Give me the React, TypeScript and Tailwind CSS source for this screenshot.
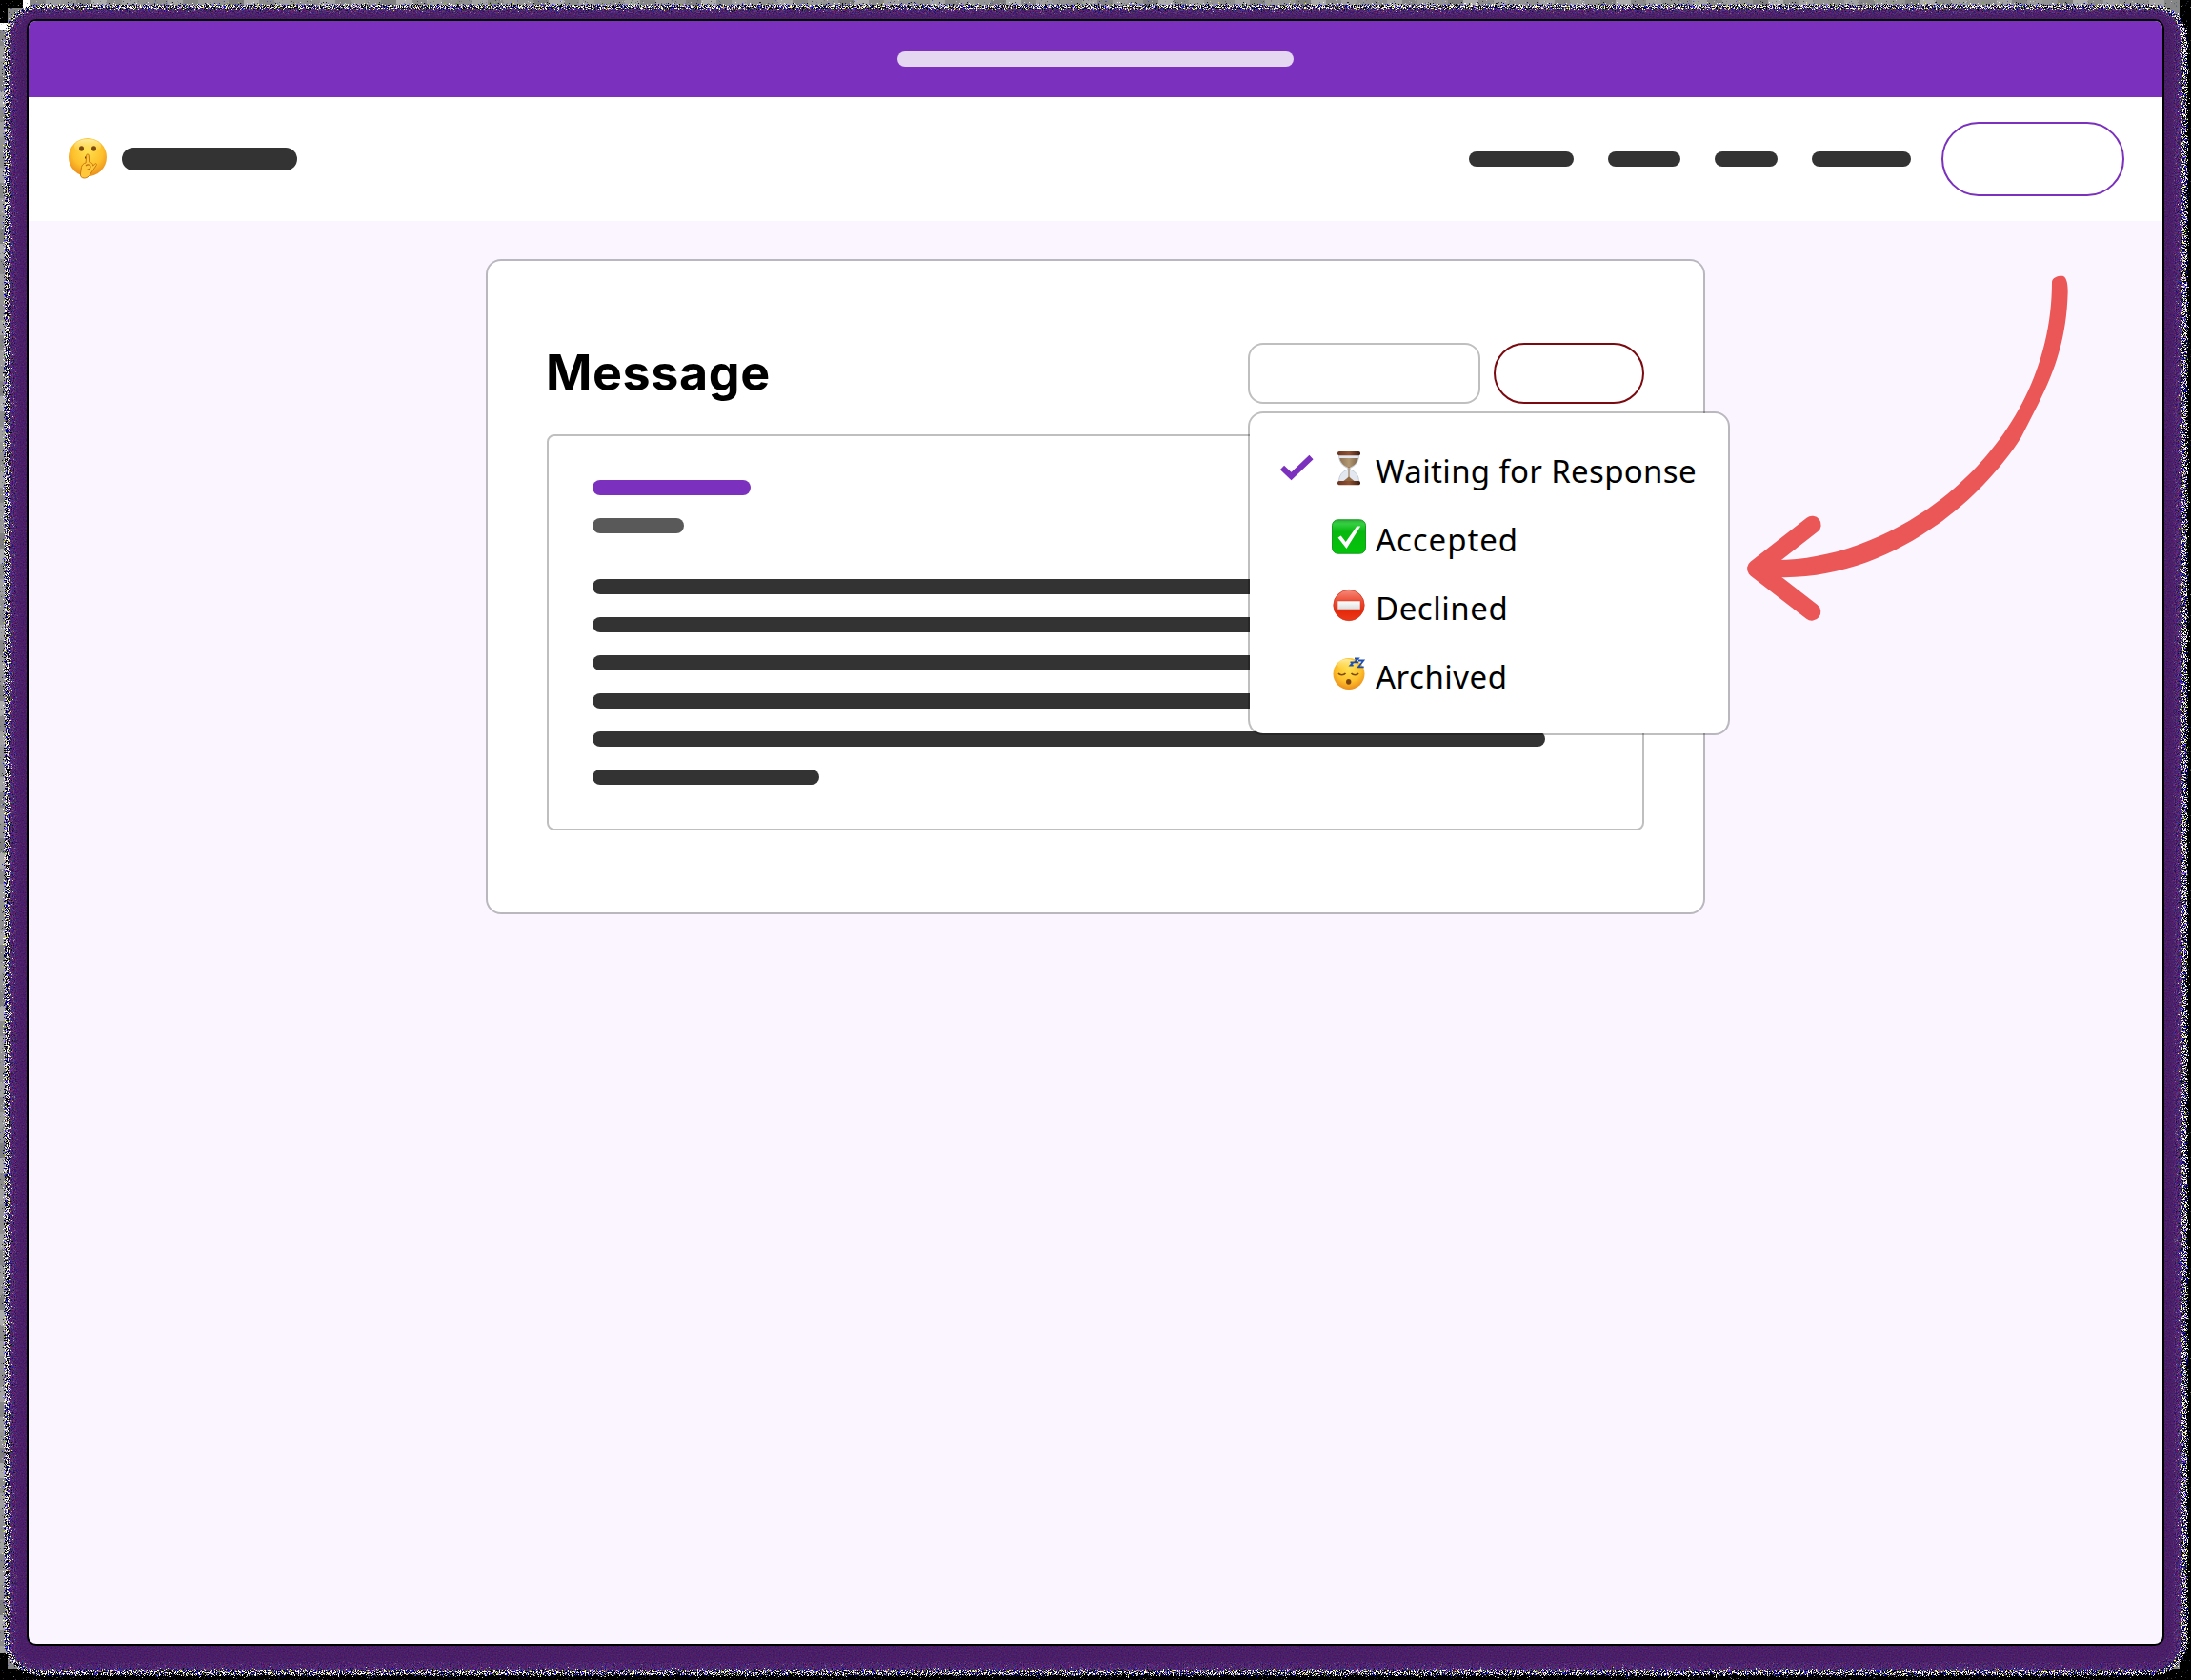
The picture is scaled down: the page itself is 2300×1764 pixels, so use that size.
import React from 'react';

function Bar({ className }: { className: string }) {
  return <div className={`rounded-full ${className}`} />;
}

function FrameTexture() {
  const greys = ['#8f8f8f', '#a4a4a4', '#868686', '#9c9c9c', '#949494', '#7f7f7f', '#adadad', '#8b8b8b', '#a0a0a0', '#939393'];
  return (
    <svg aria-hidden="true" className="absolute inset-0 h-full w-full" viewBox="0 0 2300 1764">
      <defs>
        <pattern id="greyTop" width="160" height="8" patternUnits="userSpaceOnUse">
          {greys.map((g, i) => (
            <rect key={i} x={i * 16} width="16" height="8" fill={g} />
          ))}
        </pattern>
        <pattern id="greySide" width="8" height="160" patternUnits="userSpaceOnUse">
          {greys.map((g, i) => (
            <rect key={i} y={i * 16} width="8" height="16" fill={g} />
          ))}
        </pattern>
        <filter id="speckle" x="0" y="0" width="2300" height="1764" filterUnits="userSpaceOnUse" colorInterpolationFilters="sRGB">
          <feTurbulence type="fractalNoise" baseFrequency="0.83" numOctaves="2" seed="4" result="n" />
          <feColorMatrix in="n" type="matrix" values="12 1 2 0 -7.2  12 2 1 0 -7.3  9 1 8 0 -8.4  0 0 0 0 1" result="c" />
          <feGaussianBlur in="SourceGraphic" stdDeviation="1.6" result="b" />
          <feColorMatrix in="n" type="matrix" values="0 0 0 0 0  0 0 0 0 0  0 0 0 0 0  0 2 0 0 -0.5" result="na" />
          <feComposite in="b" in2="na" operator="arithmetic" k2="10" k3="10" k4="-9.5" result="m" />
          <feComposite in="c" in2="m" operator="in" />
        </filter>
        <filter id="dissolve" x="0" y="0" width="2300" height="1764" filterUnits="userSpaceOnUse" colorInterpolationFilters="sRGB">
          <feTurbulence type="fractalNoise" baseFrequency="0.9" numOctaves="2" seed="11" result="n" />
          <feColorMatrix in="n" type="matrix" values="0 0 0 0 0  0 0 0 0 0  0 0 0 0 0  0 2 0 0 -0.5" result="na" />
          <feGaussianBlur in="SourceGraphic" stdDeviation="2.2" result="b" />
          <feComposite in="b" in2="na" operator="arithmetic" k2="8" k3="8" k4="-7.5" result="m" />
          <feColorMatrix in="n" type="matrix" values="0.9 0 0 0 -0.14  0 0.7 0 0 -0.2  0 0 0.9 0 -0.01  0 0 0 0 1" result="p" />
          <feComposite in="p" in2="m" operator="in" />
        </filter>
        <filter id="grain" x="0" y="0" width="2300" height="1764" filterUnits="userSpaceOnUse" colorInterpolationFilters="sRGB">
          <feTurbulence type="fractalNoise" baseFrequency="0.7" numOctaves="1" seed="2" result="n" />
          <feColorMatrix in="n" type="matrix" values="0.25 0 0 0 0.165  0 0.2 0 0 0.02  0 0 0.25 0 0.28  0 0 0 0 1" result="p" />
          <feGaussianBlur in="SourceGraphic" stdDeviation="2.5" result="b" />
          <feComposite in="p" in2="b" operator="in" />
        </filter>
      </defs>
      <rect width="2300" height="1764" fill="#000" />
      <rect x="32" width="2256" height="8" fill="url(#greyTop)" />
      <rect y="32" width="8" height="1704" fill="url(#greySide)" />
      <path d="M24 0h8v8h-8z M0 24h8v8H0z" fill="#fff" />
      <path d="M8 8h24v24H8z M2272 8h16v16h-16z M8 1728h16v24H8z M2264 1736h24v16h-24z" fill="#888" />
      <rect x="5" y="5" width="2291" height="1754" rx="36" fill="#fff" filter="url(#speckle)" />
      <rect x="10" y="9" width="2280" height="1745" rx="30" fill="#fff" filter="url(#dissolve)" />
      <rect x="18" y="15" width="2264" height="1731" rx="22" fill="#fff" filter="url(#grain)" />
    </svg>
  );
}

function ShushIcon() {
  return (
    <svg role="img" aria-label="Shushing face" viewBox="0 0 40 43" className="h-[43px] w-10">
      <defs>
        <radialGradient id="face" cx=".5" cy=".36" r=".66">
          <stop offset="0" stopColor="#ffdf4d" />
          <stop offset=".6" stopColor="#fdc02c" />
          <stop offset="1" stopColor="#ea8a1a" />
        </radialGradient>
        <linearGradient id="shine" x2="0" y2="1">
          <stop offset="0" stopColor="#fff3b0" stopOpacity=".9" />
          <stop offset="1" stopColor="#ffe45e" stopOpacity="0" />
        </linearGradient>
      </defs>
      <circle cx="20" cy="20" r="20" fill="url(#face)" />
      <ellipse cx="20" cy="8.500" rx="14" ry="7.500" fill="url(#shine)" />
      <ellipse cx="13.500" cy="11" rx="2.500" ry="2.800" fill="#7a4a12" />
      <ellipse cx="26.500" cy="11" rx="2.500" ry="2.800" fill="#7a4a12" />
      <path d="M17 20.500h1.500M21.500 20.500h1.500" stroke="#6b3d0c" strokeWidth="1.800" />
      <path d="M18.700 18c.2-1.500 2.300-1.500 2.500 0l.5 7.200c2.700.3 4 2 4 4l2-2.200c1.300-1 2.200.3 1.400 1.700L24 36c-1.500 3-4 6-7.500 6-3 0-4.500-1.800-4-5l1-6.500c.3-2 2-4 4.600-4.500z" fill="#ffc83a" stroke="#c97a12" strokeWidth="1" />
      <path d="M18 29c2-2 5-1 5 1s-2 3-3.500 3" fill="none" stroke="#b96c0e" strokeWidth="1.200" />
    </svg>
  );
}

function HourglassIcon() {
  return (
    <svg role="img" aria-label="Hourglass" viewBox="0 0 36 37" className="h-[37px] w-9">
      <defs>
        <linearGradient id="wood" x2="1" y2="0">
          <stop offset="0" stopColor="#6b3620" />
          <stop offset=".5" stopColor="#8f5233" />
          <stop offset="1" stopColor="#3d1c10" />
        </linearGradient>
        <linearGradient id="sand" x2="1" y2="0">
          <stop offset="0" stopColor="#8f7354" />
          <stop offset=".5" stopColor="#b39874" />
          <stop offset="1" stopColor="#7d6347" />
        </linearGradient>
      </defs>
      <path d="M7.500 4.500h21c0 8-4 11.500-9.300 14v1.500C25 22 28.500 26 28.500 33h-21c0-7 3.500-11 9.300-13v-1.500C11.500 16 7.500 12.500 7.500 4.500z" fill="#e3e8f0" stroke="#b9c1cd" strokeWidth=".8" />
      <path d="M8.200 8h19.600c-.8 4-3.600 7.800-8.800 10h-2C11.800 15.800 9 12 8.200 8z" fill="url(#sand)" />
      <path d="M17.500 17h1v10.500c1.500 2 4 3.700 6.800 5.500H10.700c2.800-1.800 5.300-3.500 6.800-5.500z" fill="#8f6a44" />
      <rect x="6" y="1" width="24" height="4.300" rx="1.800" fill="url(#wood)" />
      <rect x="6" y="32" width="24" height="4.300" rx="1.800" fill="url(#wood)" />
    </svg>
  );
}

function AcceptedIcon() {
  return (
    <svg role="img" aria-label="Accepted" viewBox="0 0 36 37" className="h-[37px] w-9">
      <defs>
        <linearGradient id="green" x2="0" y2="1">
          <stop offset="0" stopColor="#2fae3c" />
          <stop offset=".12" stopColor="#35cf42" />
          <stop offset=".35" stopColor="#07b80f" />
          <stop offset="1" stopColor="#04c40a" />
        </linearGradient>
      </defs>
      <rect x=".5" y=".8" width="35" height="35.400" rx="6" fill="url(#green)" stroke="#159a1f" />
      <path d="M6.500 19.500l3.200-1.900 5 6.500L26.300 7.500h3.900L15.500 31z" fill="#fff" />
    </svg>
  );
}

function DeclinedIcon() {
  return (
    <svg role="img" aria-label="Declined" viewBox="0 0 36 37" className="h-[37px] w-9">
      <defs>
        <linearGradient id="red" x2="0" y2="1">
          <stop offset="0" stopColor="#f58c7c" />
          <stop offset=".35" stopColor="#ee5038" />
          <stop offset=".7" stopColor="#e52a0c" />
          <stop offset="1" stopColor="#ec3a1a" />
        </linearGradient>
        <linearGradient id="plate" x2="0" y2="1">
          <stop offset="0" stopColor="#fff" />
          <stop offset="1" stopColor="#dcdcdc" />
        </linearGradient>
      </defs>
      <circle cx="18" cy="18.500" r="16.200" fill="url(#red)" stroke="#cf3520" strokeWidth=".8" />
      <rect x="6" y="14" width="24" height="9" fill="url(#plate)" stroke="#c9452e" strokeWidth=".5" />
    </svg>
  );
}

function ArchivedIcon() {
  return (
    <svg role="img" aria-label="Sleeping face" viewBox="0 0 36 37" className="h-[37px] w-9">
      <circle cx="18" cy="18.500" r="16.500" fill="url(#face)" />
      <ellipse cx="16" cy="9" rx="10" ry="6" fill="url(#shine)" />
      <path d="M7 18c1.500 2.300 5.500 2.300 7.500 0M20.500 18c2 2.300 6 2.300 7.500 0" fill="none" stroke="#7a4a12" strokeWidth="1.700" />
      <ellipse cx="17.700" cy="26.800" rx="2.700" ry="2.900" fill="#7a4310" />
      <path d="M19.500 6.300h3l-3 3.400h3.200M24 2.500h3.700L24 6.300h4M28 4.500h5.300L28 11.300h5.700" fill="none" stroke="#1d4fb0" strokeWidth="1.800" />
    </svg>
  );
}

const options = [
  { label: 'Waiting for Response', Icon: HourglassIcon, selected: true, text: 'tracking-[0.33px]' },
  { label: 'Accepted', Icon: AcceptedIcon, selected: false, text: 'tracking-[0.95px]' },
  { label: 'Declined', Icon: DeclinedIcon, selected: false, text: 'tracking-[0.55px]' },
  { label: 'Archived', Icon: ArchivedIcon, selected: false, text: 'tracking-[0.5px]' },
];

function StatusMenu() {
  return (
    <ul className="absolute top-[72px] left-0 z-10 h-[340px] w-[506px] rounded-2xl border-2 border-black/25 bg-white bg-clip-padding pt-6">
      {options.map(({ label, Icon, selected, text }) => (
        <li key={label} className="flex h-[72px] items-center pl-8">
          <span className="flex w-[54px] shrink-0">
            {selected && (
              <svg viewBox="0 0 36 28" className="-mt-[7px] h-7 w-9" aria-hidden="true">
                <path d="M2 14L11.500 23 32.500 3" fill="none" stroke="#7b31be" strokeWidth="6" />
              </svg>
            )}
          </span>
          <span className="-mt-[6px] flex shrink-0">
            <Icon />
          </span>
          <span className={`mt-px ml-[10px] whitespace-nowrap font-['Noto_Sans',sans-serif] text-[33px] leading-[44px] text-black ${text}`}>{label}</span>
        </li>
      ))}
    </ul>
  );
}

function Arrow() {
  return (
    <svg aria-hidden="true" viewBox="0 0 1140 1200" className="absolute top-[248px] left-[1790px] h-[400px] w-[380px]">
      <path
        d="M135 954C520 954 1002 600 1002 78C1004 62 1026 58 1038 60C1050 66 1052 90 1052 110C1048 250 1015 350 960 460L905 568C780 765 490 1020 135 1008L60 1000V960z"
        fill="#eb5757"
      />
      <path d="M247 843L70 981L246 1117" fill="none" stroke="#eb5757" strokeWidth="56" strokeLinecap="round" strokeLinejoin="round" />
    </svg>
  );
}

export default function App() {
  return (
    <div className="relative h-[1764px] w-[2300px] overflow-hidden pt-5 pl-7">
      <FrameTexture />
      <div className="relative flex h-[1708px] w-[2244px] flex-col overflow-hidden rounded-[10px] border-2 border-black bg-[#faf5ff]">
        <div className="flex h-20 shrink-0 items-center justify-center bg-[#7b31be]">
          <Bar className="h-4 w-[416px] bg-[#e5d6f2]" />
        </div>
        <header className="flex h-[130px] shrink-0 items-center justify-between bg-white pr-10 pl-[42px]">
          <div className="flex items-center gap-4">
            <span className="-mt-[2px]">
              <ShushIcon />
            </span>
            <Bar className="h-6 w-[184px] bg-[#333333]" />
          </div>
          <nav className="flex items-center">
            <div className="mr-8 flex gap-9">
              <Bar className="h-4 w-[110px] bg-[#333333]" />
              <Bar className="h-4 w-[76px] bg-[#333333]" />
              <Bar className="h-4 w-[66px] bg-[#333333]" />
              <Bar className="h-4 w-[104px] bg-[#333333]" />
            </div>
            <button aria-label="Account" className="h-[78px] w-48 rounded-full border-2 border-[#7b31be]" />
          </nav>
        </header>
        <main className="mx-auto mt-10 h-[688px] w-[1280px] rounded-2xl border-2 border-black/25 bg-white bg-clip-padding px-[62px] pt-[86px]">
          <div className="flex h-16 items-center justify-between">
            <h1 className="-ml-px font-['Inter',sans-serif] text-[52px] leading-[64px] font-bold tracking-[0.6px] text-black">Message</h1>
            <div className="relative flex gap-[14px]">
              <button aria-label="Status" className="h-16 w-[244px] rounded-2xl border-2 border-black/25" />
              <button aria-label="Delete" className="h-16 w-[158px] rounded-full border-2 border-[#7a0a0f]" />
              <StatusMenu />
            </div>
          </div>
          <article className="mt-8 flex h-[416px] flex-col gap-6 rounded-lg border-2 border-black/25 p-[46px]">
            <Bar className="h-4 w-[166px] bg-[#7b31be]" />
            <Bar className="mb-6 h-4 w-24 bg-[#595959]" />
            <Bar className="h-4 w-[1000px] bg-[#333333]" />
            <Bar className="h-4 w-[1000px] bg-[#333333]" />
            <Bar className="h-4 w-[1000px] bg-[#333333]" />
            <Bar className="h-4 w-[1000px] bg-[#333333]" />
            <Bar className="h-4 w-[1000px] bg-[#333333]" />
            <Bar className="h-4 w-[238px] bg-[#333333]" />
          </article>
        </main>
        <Arrow />
      </div>
    </div>
  );
}
